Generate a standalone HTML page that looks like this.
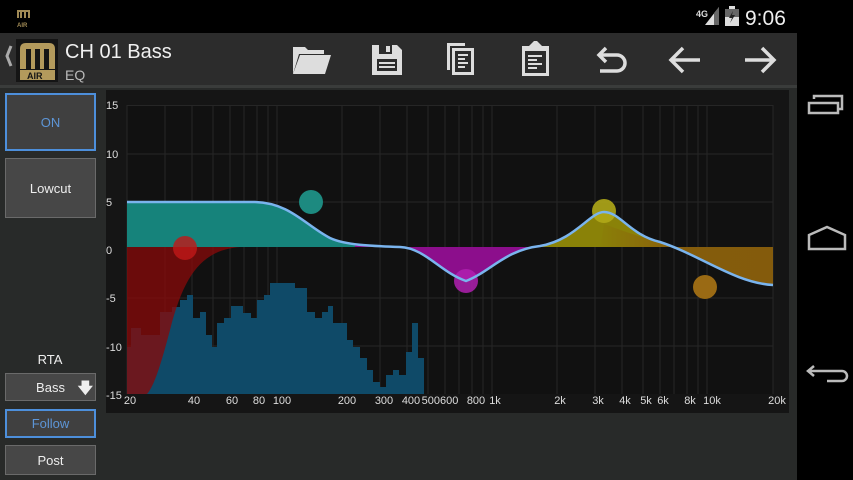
<!DOCTYPE html>
<html><head><meta charset="utf-8"><style>
*{margin:0;padding:0;box-sizing:border-box}
body{width:853px;height:480px;background:#282a29;font-family:"Liberation Sans",sans-serif;position:relative;overflow:hidden;color:#eee}
.abs{position:absolute}
.btn{position:absolute;left:5px;width:91px;background:#474747;border:1px solid #6a6a6a;color:#eee;font-size:13px;display:flex;align-items:center;justify-content:center}
.sel{border:2px solid #4d8fdb;color:#5d95d6;background:#404040}
</style></head><body>
<div class="abs" style="left:0;top:0;width:853px;height:33px;background:#000"></div>
<div class="abs" style="left:797px;top:0;width:56px;height:480px;background:#000"></div>
<div class="abs" style="left:0;top:33px;width:797px;height:52px;background:#2c2c2c"></div>
<div class="abs" style="left:0;top:85px;width:797px;height:3px;background:#3a3c3b"></div>
<svg class="abs" style="left:0;top:0" width="853" height="33">
 <g fill="#a08a55"><path d="M17 10h13v8h-2v-6h-2v6h-2v-6h-2v6h-2v-6h-1v6h-2z"/><text x="17" y="27" font-size="6" font-family="Liberation Sans" font-weight="bold">AIR</text></g>
 <text x="696" y="17" font-size="9" fill="#ddd" font-family="Liberation Sans" font-weight="bold">4G</text>
 <path d="M705 25L719 7V25Z" fill="#ddd"/><path d="M714 13L719 7V25H714Z" fill="#666"/>
 <rect x="725" y="9" width="14" height="17" fill="#ddd"/><rect x="729" y="6" width="6" height="3" fill="#ddd"/><rect x="725" y="9" width="14" height="8" fill="#666"/>
 <path d="M733 11l-4 7h3l-2 5 5-8h-3z" fill="#222"/>
 <text x="745" y="25" font-size="21" fill="#eee" font-family="Liberation Sans">9:06</text>
</svg>
<svg class="abs" style="left:0;top:33px" width="797" height="52">
 <path d="M11 13l-4 10 4 10" stroke="#aaa" stroke-width="3" fill="none"/>
 <rect x="16" y="6" width="42" height="43" fill="#151515"/>
 <path d="M20 16q0-6 6-6h23q6 0 6 6v20h-6V16h-5v20h-4V16h-5v20h-4V16h-5v20h-6z" fill="#b39a5c"/>
 <rect x="20" y="37" width="35" height="10" fill="#b39a5c"/>
 <text x="27" y="46" font-size="9" font-weight="bold" fill="#151515" font-family="Liberation Sans">AIR</text>
 <text x="65" y="25" font-size="20" fill="#f0f0f0" font-family="Liberation Sans">CH 01 Bass</text>
 <text x="65" y="47" font-size="14" fill="#bbb" font-family="Liberation Sans">EQ</text>
 <g fill="#ddd">
  <path d="M293 14h12l3 3h16v4h-25l-6 20z"/><path d="M300 22h31l-6 19h-32z"/>
  <path d="M372 12h25l5 5v25h-30z"/><rect x="379" y="12" width="13" height="9" fill="#2c2c2c"/><rect x="386" y="13" width="4" height="6"/>
  <rect x="377" y="26" width="20" height="12" fill="#2c2c2c"/><rect x="379" y="29" width="16" height="2"/><rect x="379" y="33" width="16" height="2"/>
  <path d="M447 10h18v3h-15v24h-3z"/><rect x="452" y="15" width="22" height="27"/><rect x="455" y="18" width="16" height="21" fill="#2c2c2c"/>
  <rect x="458" y="21" width="10" height="2"/><rect x="458" y="25" width="7" height="2"/><rect x="458" y="29" width="10" height="2"/><rect x="458" y="33" width="7" height="2"/>
  <rect x="522" y="13" width="27" height="30"/><rect x="525" y="18" width="21" height="22" fill="#2c2c2c"/><path d="M529 13l5-5h3l5 5v4h-13z"/>
  <rect x="528" y="22" width="14" height="2"/><rect x="528" y="26" width="9" height="2"/><rect x="528" y="30" width="14" height="2"/><rect x="528" y="34" width="9" height="2"/>
 </g>
 <g stroke="#ddd" stroke-width="3.5" fill="none">
  <path d="M600 22h17a8 8 0 0 1 0 16h-17"/><path d="M606 15l-7 7 7 7"/>
  <path d="M671 27h29M683 15l-12 12 12 12"/>
  <path d="M745 27h29M762 15l12 12-12 12"/>
 </g>
</svg>
<svg class="abs" style="left:797px;top:0" width="56" height="480" fill="none" stroke="#bbb" stroke-width="2.5">
 <rect x="12" y="103" width="29" height="10"/><path d="M17 99v-3h28v13h-3"/>
 <path d="M12 249v-14l18-8 18 8v14z"/>
 <path d="M17 366l-6 5 6 5M11 371h34a5 5 0 0 1 0 10h-15"/>
</svg>
<div class="btn sel" style="top:93px;height:58px">ON</div>
<div class="btn" style="top:158px;height:60px">Lowcut</div>
<div class="abs" style="left:0;width:100px;top:352px;text-align:center;font-size:13px">RTA</div>
<div class="btn" style="top:373px;height:28px">Bass<span style="position:absolute;right:2px;top:4px;font-size:15px;font-weight:bold">🡇</span></div>
<div class="btn sel" style="top:409px;height:29px">Follow</div>
<div class="btn" style="top:445px;height:30px">Post</div>
<svg class="abs" style="left:0;top:0" width="797" height="480" font-family="Liberation Sans">
 <defs>
  <path id="fill" d="M127,202 L255,202 C290,203 305,225 330,238 C345,245 370,246 400,247 C425,248 440,272 466,281 C490,272 505,250 540,246 C575,240 590,212 604,212 C620,212 630,235 660,242 C700,255 735,283 773,285 L773,247 L127,247 Z"/>
  <clipPath id="c1"><rect x="120" y="90" width="235" height="320"/></clipPath>
  <clipPath id="c2"><rect x="355" y="90" width="175" height="320"/></clipPath>
  <clipPath id="c3"><rect x="530" y="90" width="135" height="320"/></clipPath>
  <linearGradient id="og" x1="0" x2="1"><stop offset="0" stop-color="#8a8008"/><stop offset="0.4" stop-color="#8a600c"/><stop offset="1" stop-color="#8a5f0c"/></linearGradient>
 </defs>
 <rect x="106" y="90" width="683" height="323" fill="#151515"/>
 <rect x="127" y="105" width="646" height="289" fill="#111"/>
 <g stroke="#262626" stroke-width="1">
  <path d="M127 105.5H773M127 154H773M127 202H773M127 298H773M127 346H773"/>
  <path d="M127 105V394M165 105V394M192 105V394M213 105V394M230 105V394M244 105V394M257 105V394M268 105V394M277 105V394M342 105V394M380 105V394M407 105V394M428 105V394M445 105V394M459 105V394M472 105V394M483 105V394M492 105V394M557 105V394M595 105V394M622 105V394M643 105V394M660 105V394M674 105V394M687 105V394M698 105V394M707 105V394M773 105V394"/>
 </g>
 <g fill="#0f4a68">
  <rect x="127" y="347" width="4" height="47"/><rect x="131" y="328" width="10" height="66"/><rect x="141" y="335" width="13" height="59"/><rect x="154" y="335" width="6" height="59"/>
  <rect x="160" y="312" width="12" height="82"/><rect x="172" y="307" width="8" height="87"/><rect x="180" y="300" width="7" height="94"/><rect x="187" y="295" width="6" height="99"/>
  <rect x="193" y="318" width="7" height="76"/><rect x="200" y="312" width="6" height="82"/><rect x="206" y="335" width="6" height="59"/><rect x="212" y="347" width="5" height="47"/>
  <rect x="217" y="323" width="7" height="71"/><rect x="224" y="318" width="7" height="76"/><rect x="231" y="306" width="12" height="88"/><rect x="243" y="313" width="8" height="81"/>
  <rect x="251" y="318" width="6" height="76"/><rect x="257" y="300" width="7" height="94"/><rect x="264" y="295" width="6" height="99"/><rect x="270" y="283" width="25" height="111"/>
  <rect x="295" y="288" width="12" height="106"/><rect x="307" y="312" width="8" height="82"/><rect x="315" y="318" width="7" height="76"/><rect x="322" y="312" width="6" height="82"/>
  <rect x="328" y="306" width="5" height="88"/><rect x="333" y="323" width="14" height="71"/><rect x="347" y="340" width="6" height="54"/><rect x="353" y="347" width="7" height="47"/>
  <rect x="360" y="358" width="7" height="36"/><rect x="367" y="370" width="6" height="24"/><rect x="373" y="382" width="7" height="12"/><rect x="380" y="387" width="6" height="7"/>
  <rect x="386" y="375" width="7" height="19"/><rect x="393" y="370" width="6" height="24"/><rect x="399" y="375" width="7" height="19"/><rect x="406" y="352" width="6" height="42"/>
  <rect x="412" y="323" width="6" height="71"/><rect x="418" y="358" width="6" height="36"/>
 </g>
 <path d="M127,247 L240,247 C205,250 185,270 170,330 C162,360 155,385 147,394 L127,394 Z" fill="#850a0a" opacity="0.78"/>
 <use href="#fill" fill="#16837b" clip-path="url(#c1)"/>
 <use href="#fill" fill="#8c0e8c" clip-path="url(#c2)"/>
 <use href="#fill" fill="#8a8208" clip-path="url(#c3)"/>
 <path d="M600,247 L773,247 L773,285 C735,283 700,255 660,242 C640,237 620,230 604,224 Z" fill="url(#og)" opacity="0.95"/>
 <circle cx="185" cy="248" r="12" fill="#c01818" opacity="0.8"/>
 <circle cx="311" cy="202" r="12" fill="#1d8a80"/>
 <circle cx="466" cy="281" r="12" fill="#b020b0" opacity="0.85"/>
 <circle cx="604" cy="211" r="12" fill="#b0a818" opacity="0.9"/>
 <circle cx="705" cy="287" r="12" fill="#9a6a14"/>
 <path d="M127,202 L255,202 C290,203 305,225 330,238 C345,245 370,246 400,247 C425,248 440,272 466,281 C490,272 505,250 540,246 C575,240 590,212 604,212 C620,212 630,235 660,242 C700,255 735,283 773,285" stroke="#7ab4ee" stroke-width="2.5" fill="none"/>
 <g fill="#ddd" font-size="11">
  <text x="106" y="109">15</text><text x="106" y="158">10</text><text x="106" y="206">5</text><text x="106" y="254">0</text>
  <text x="106" y="302">-5</text><text x="106" y="351">-10</text><text x="106" y="399">-15</text>
 </g>
 <g fill="#ddd" font-size="11" text-anchor="middle">
  <text x="130" y="404">20</text><text x="194" y="404">40</text><text x="232" y="404">60</text><text x="259" y="404">80</text><text x="282" y="404">100</text>
  <text x="347" y="404">200</text><text x="384" y="404">300</text><text x="411" y="404">400</text><text x="440" y="404">500600</text><text x="476" y="404">800</text><text x="495" y="404">1k</text>
  <text x="560" y="404">2k</text><text x="598" y="404">3k</text><text x="625" y="404">4k</text><text x="646" y="404">5k</text><text x="663" y="404">6k</text>
  <text x="690" y="404">8k</text><text x="712" y="404">10k</text><text x="777" y="404">20k</text>
 </g>
</svg>
</body></html>
